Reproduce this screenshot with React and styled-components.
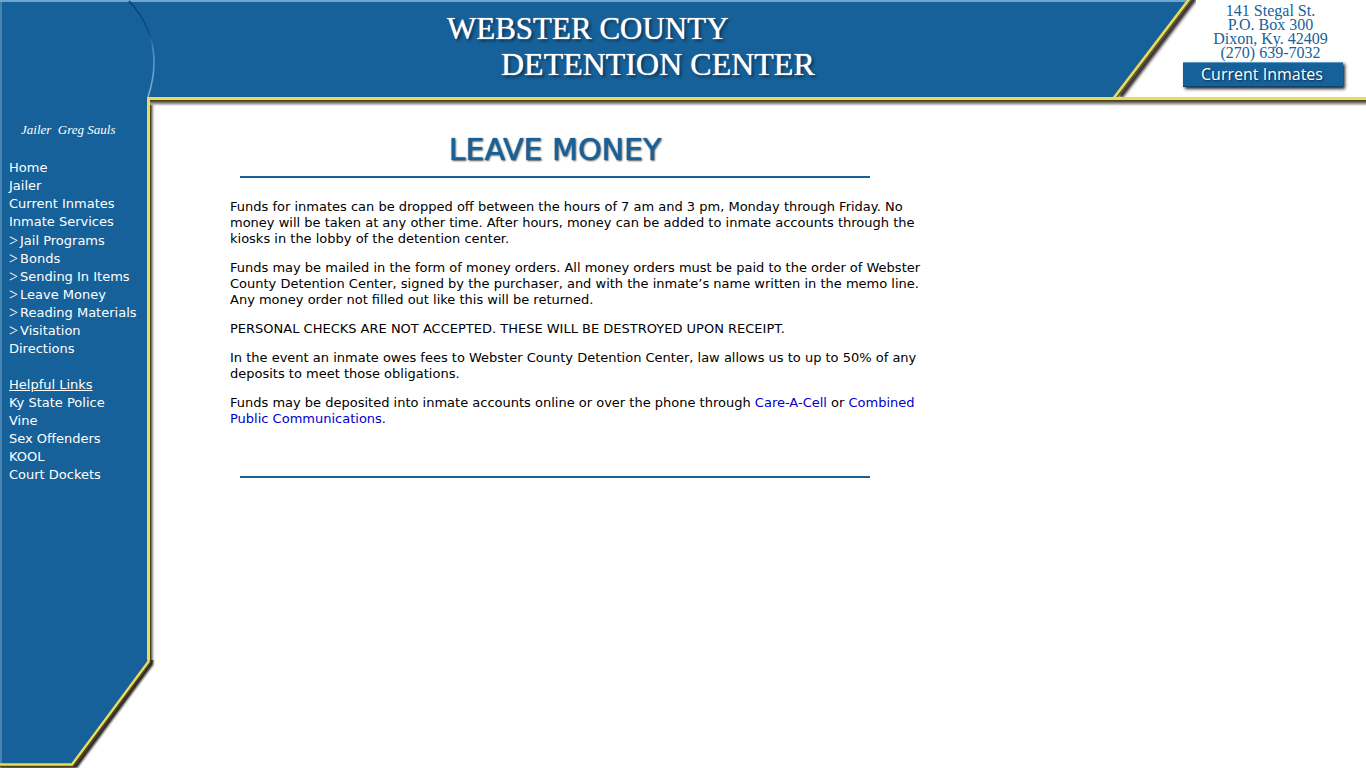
import React from 'react';
import styled, { createGlobalStyle } from 'styled-components';

const BLUE = '#166199';
const YELLOW = '#e6dc62';

const siteLinks = ['Home', 'Jailer', 'Current Inmates', 'Inmate Services'];

const serviceLinks = [
    'Jail Programs',
    'Bonds',
    'Sending In Items',
    'Leave Money',
    'Reading Materials',
    'Visitation',
];

const helpfulLinks = [
    'Ky State Police',
    'Vine',
    'Sex Offenders',
    'KOOL',
    'Court Dockets',
];

function Header() {
    return (
        <HeaderBar>
            <Banner>
                <Arc viewBox="0 0 28 97" aria-hidden="true">
                    <defs>
                        <linearGradient id="arc" x1="0" y1="0" x2="0" y2="1">
                            <stop offset="0" stopColor="#0b3f68" />
                            <stop offset="0.35" stopColor="#11507f" />
                            <stop offset="0.5" stopColor="#4d8cbc" />
                            <stop offset="1" stopColor="#7fb0d4" />
                        </linearGradient>
                    </defs>
                    <path
                        d="M1 1C15 16 26 37 26 62C26 76 23 88 20 97"
                        fill="none"
                        stroke="url(#arc)"
                        strokeWidth="1.6"
                    />
                </Arc>
                <SiteTitle>
                    <TitleLine $size={31}>WEBSTER COUNTY</TitleLine>
                    <TitleLine $size={32} $indent>
                        DETENTION CENTER
                    </TitleLine>
                </SiteTitle>
            </Banner>
            <Slant viewBox="0 0 84 97" aria-hidden="true">
                <defs>
                    <filter id="slantBlur" x="-20%" y="-20%" width="140%" height="140%">
                        <feGaussianBlur stdDeviation="1.5" />
                    </filter>
                </defs>
                <path
                    d="M83 -2L8 97"
                    stroke="#2a2226"
                    strokeWidth="5"
                    filter="url(#slantBlur)"
                />
                <path d="M0 0H77L3 97H0Z" fill={BLUE} />
                <path d="M0 0H77V2H0Z" fill="#6ea5cb" />
                <path d="M79 -2L2 99" stroke="#5d5626" strokeWidth="4" />
                <path d="M78 -2L1 99" stroke={YELLOW} strokeWidth="2.6" />
            </Slant>
            <Contact>
                <Address>
                    141 Stegal St.
                    <br />
                    P.O. Box 300
                    <br />
                    Dixon, Ky. 42409
                    <br />
                    (270) 639-7032
                </Address>
                <InmatesButton type="button">Current Inmates</InmatesButton>
            </Contact>
        </HeaderBar>
    );
}

function Links({ labels, nested }) {
    return (
        <LinkList $nested={nested}>
            {labels.map(label => (
                <LinkRow key={label}>
                    {nested && <Arrow>&gt;</Arrow>}
                    <SideLink href="#">{label}</SideLink>
                </LinkRow>
            ))}
        </LinkList>
    );
}

function Sidebar() {
    return (
        <Side>
            <SidePanel>
                <JailerName>Jailer&nbsp; Greg Sauls</JailerName>
                <nav>
                    <Links labels={siteLinks} />
                    <Links labels={serviceLinks} nested />
                    <Links labels={['Directions']} />
                    <LinksHeading>Helpful Links</LinksHeading>
                    <Links labels={helpfulLinks} />
                </nav>
            </SidePanel>
            <SideCorner viewBox="0 0 156 108" aria-hidden="true">
                <defs>
                    <filter id="cornerBlur" x="-10%" y="-10%" width="120%" height="120%">
                        <feGaussianBlur stdDeviation="1.3" />
                    </filter>
                </defs>
                <path
                    d="M151 -6V4L76 106H0"
                    fill="none"
                    stroke="#1d1815"
                    strokeWidth="4"
                    filter="url(#cornerBlur)"
                />
                <path d="M0 0H148V2L72 105H0Z" fill={BLUE} />
                <path d="M0 0H2V104H0Z" fill="#4583b0" />
                <path
                    d="M149.500 0V2L73 105.500H0"
                    fill="none"
                    stroke="#4c451c"
                    strokeWidth="3.500"
                />
                <path
                    d="M148.500 0V1.500L72 104.500H0"
                    fill="none"
                    stroke={YELLOW}
                    strokeWidth="2.400"
                />
            </SideCorner>
        </Side>
    );
}

function LeaveMoney() {
    return (
        <Article>
            <PageTitle>LEAVE MONEY</PageTitle>
            <Rule />
            <Copy>
                <p>
                    Funds for inmates can be dropped off between the hours of 7
                    am and 3 pm, Monday through Friday. No money will be taken
                    at any other time. After hours, money can be added to inmate
                    accounts through the kiosks in the lobby of the detention
                    center.
                </p>
                <p>
                    Funds may be mailed in the form of money orders. All money
                    orders must be paid to the order of Webster County Detention
                    Center, signed by the purchaser, and with the inmate’s name
                    written in the memo line. Any money order not filled out
                    like this will be returned.
                </p>
                <p>
                    PERSONAL CHECKS ARE NOT ACCEPTED. THESE WILL BE DESTROYED
                    UPON RECEIPT.
                </p>
                <p>
                    In the event an inmate owes fees to Webster County Detention
                    Center, law allows us to up to 50% of any deposits to meet
                    those obligations.
                </p>
                <p>
                    Funds may be deposited into inmate accounts online or over
                    the phone through <a href="#">Care-A-Cell</a> or{' '}
                    <a href="#">Combined Public Communications</a>.
                </p>
            </Copy>
            <Rule />
        </Article>
    );
}

function App() {
    return (
        <Page>
            <GlobalStyle />
            <Header />
            <Body>
                <Sidebar />
                <Main>
                    <LeaveMoney />
                </Main>
            </Body>
        </Page>
    );
}

const GlobalStyle = createGlobalStyle`
    * {
        box-sizing: border-box;
    }

    body {
        margin: 0;
        background: #fff;
        color: #000;
        font-family: Verdana, 'DejaVu Sans', sans-serif;
        font-size: 13px;
    }
`;

const Page = styled.div`
    min-height: 100vh;
    display: flex;
    flex-direction: column;
`;

const HeaderBar = styled.header`
    display: flex;
    height: 97px;
`;

const Banner = styled.div`
    flex: 1;
    display: flex;
    background: ${BLUE};
    border-top: 2px solid #6ea5cb;
    box-shadow: inset 2px 0 0 #4583b0;
`;

const Arc = styled.svg`
    flex: none;
    width: 28px;
    height: 97px;
    margin: -2px 0 0 128px;
`;

const SiteTitle = styled.h1`
    margin: 9px 0 0 291px;
    color: #fff;
    font-family: 'Liberation Serif', serif;
    font-weight: 400;
    white-space: nowrap;
    text-shadow: 0 0 1px #fff, 2px 2px 3px #0a2c49;
`;

const TitleLine = styled.span`
    display: block;
    padding-left: ${({ $indent }) => ($indent ? '54px' : '0')};
    font-size: ${({ $size }) => $size}px;
    line-height: ${({ $indent }) => ($indent ? '34px' : '36px')};
`;

const Slant = styled.svg`
    flex: none;
    width: 84px;
    height: 97px;
`;

const Contact = styled.div`
    flex: none;
    width: 183px;
    margin-left: -13px;
    padding-top: 4px;
`;

const Address = styled.address`
    width: 175px;
    margin-bottom: 2px;
    color: ${BLUE};
    font-family: 'Liberation Serif', serif;
    font-size: 16px;
    font-style: normal;
    line-height: 14px;
    text-align: center;
    white-space: nowrap;
`;

const InmatesButton = styled.button`
    display: block;
    width: 160px;
    height: 25px;
    padding: 0 2px 2px 0;
    border: 0;
    border-top: 1px solid #5f9ac4;
    border-bottom: 1px solid #0d446e;
    background: ${BLUE};
    box-shadow: 2px 2px 3px #2a2226;
    color: #fff;
    font-family: 'Open Sans', sans-serif;
    font-size: 16px;
    line-height: 20px;
    text-shadow: 1px 1px 2px #0a2c49;
    cursor: pointer;
`;

const Body = styled.div`
    flex: 1;
    display: flex;
`;

const Side = styled.aside`
    flex: none;
    width: 150px;
    display: flex;
    flex-direction: column;
`;

const SidePanel = styled.div`
    flex: 1;
    padding: 24px 0 24px 9px;
    background: ${BLUE};
    border-right: 3px solid ${YELLOW};
    box-shadow: inset 2px 0 0 #4583b0, 1px 3px 0 #4c451c, 2px 4px 3px #1d1815;
    color: #fff;
`;

const SideCorner = styled.svg`
    flex: none;
    width: 156px;
    height: 108px;
`;

const JailerName = styled.p`
    margin: 0 0 20px 12px;
    font-family: 'Monotype Corsiva', 'Liberation Serif', serif;
    font-size: 13px;
    font-style: italic;
    line-height: 18px;
`;

const LinkList = styled.ul`
    margin: 0;
    padding: ${({ $nested }) => ($nested ? '1px 0 0' : '0')};
    list-style: none;
`;

const LinkRow = styled.li`
    display: flex;
    gap: 2px;
    line-height: 18px;
    white-space: nowrap;
`;

const Arrow = styled.span`
    font-family: 'Liberation Serif', serif;
    font-size: 16px;
`;

const SideLink = styled.a`
    color: #fff;
    text-decoration: none;
`;

const LinksHeading = styled.h2`
    margin: 18px 0 0;
    font-size: 13px;
    font-weight: 400;
    line-height: 18px;
    text-decoration: underline;
`;

const Main = styled.main`
    flex: 1;
    padding: 31px 20px 20px 80px;
    border-top: 3px solid ${YELLOW};
    background-image: linear-gradient(
        #4c451c 0,
        #4c451c 1px,
        #6b6462 2px,
        #b5aeb0 4px,
        transparent 6px
    );
    background-repeat: no-repeat;
    background-size: 100% 6px;
`;

const Article = styled.article`
    max-width: 700px;
`;

const PageTitle = styled.h2`
    max-width: 650px;
    margin: 0 0 7px;
    color: ${BLUE};
    font-size: 30px;
    font-weight: 400;
    line-height: 38px;
    text-align: center;
    text-shadow: 0 0 1px ${BLUE}, 1px 1px 2px #555;
`;

const Rule = styled.hr`
    max-width: 630px;
    height: 2px;
    margin: 0 0 0 10px;
    border: 0;
    background: ${BLUE};
`;

const Copy = styled.div`
    padding: 21px 0 49px;
    line-height: 16px;

    p {
        margin: 0 0 13px;
    }

    p:last-child {
        margin: 0;
    }

    a {
        color: #0000cc;
        text-decoration: none;
    }
`;

export default App;
